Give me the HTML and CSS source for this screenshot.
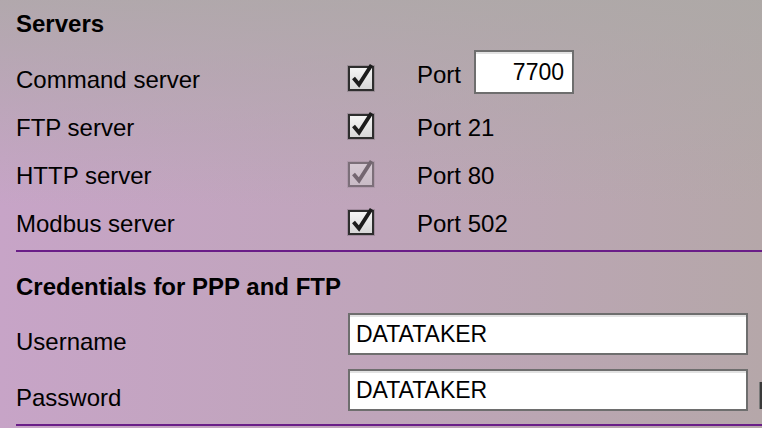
FILE: index.html
```html
<!DOCTYPE html>
<html lang="en">
<head>
<meta charset="utf-8">
<title>Servers</title>
<link rel="stylesheet" href="styles.css">
</head>
<body>
<div class="page">
  <section class="servers">
    <h2 class="section-title">Servers</h2>
    <div class="server-row">
      <span class="label">Command server</span>
      <span class="check">
        <svg width="28" height="28" viewBox="0 0 28 28"><defs><linearGradient id="cbg" x1="0" y1="0" x2="0" y2="1"><stop offset="0" stop-color="#f6f6f6"/><stop offset="1" stop-color="#d6d6d6"/></linearGradient></defs><rect x="0.5" y="1.5" width="27" height="26" fill="none" stroke="rgba(0,0,0,0.15)"/><rect x="2" y="3" width="24" height="23" fill="url(#cbg)" stroke="#2e2e2e" stroke-width="2"/><path d="M6.5 14 L12 20.5 L24.5 1" fill="none" stroke="#1c1c1c" stroke-width="3.8"/></svg>
      </span>
      <span class="port port-edit"><span class="port-word">Port</span><input class="port-input" type="text" value="7700"></span>
    </div>
    <div class="server-row">
      <span class="label">FTP server</span>
      <span class="check">
        <svg width="28" height="28" viewBox="0 0 28 28"><rect x="0.5" y="1.5" width="27" height="26" fill="none" stroke="rgba(0,0,0,0.15)"/><rect x="2" y="3" width="24" height="23" fill="url(#cbg)" stroke="#2e2e2e" stroke-width="2"/><path d="M6.5 14 L12 20.5 L24.5 1" fill="none" stroke="#1c1c1c" stroke-width="3.8"/></svg>
      </span>
      <span class="port">Port 21</span>
    </div>
    <div class="server-row">
      <span class="label">HTTP server</span>
      <span class="check check-disabled">
        <svg width="28" height="28" viewBox="0 0 28 28"><rect x="0.5" y="1.5" width="27" height="26" fill="none" stroke="rgba(0,0,0,0.15)"/><rect x="2" y="3" width="24" height="23" fill="url(#cbg)" stroke="#2e2e2e" stroke-width="2"/><path d="M6.5 14 L12 20.5 L24.5 1" fill="none" stroke="#1c1c1c" stroke-width="3.8"/></svg>
      </span>
      <span class="port">Port 80</span>
    </div>
    <div class="server-row">
      <span class="label">Modbus server</span>
      <span class="check">
        <svg width="28" height="28" viewBox="0 0 28 28"><rect x="0.5" y="1.5" width="27" height="26" fill="none" stroke="rgba(0,0,0,0.15)"/><rect x="2" y="3" width="24" height="23" fill="url(#cbg)" stroke="#2e2e2e" stroke-width="2"/><path d="M6.5 14 L12 20.5 L24.5 1" fill="none" stroke="#1c1c1c" stroke-width="3.8"/></svg>
      </span>
      <span class="port">Port 502</span>
    </div>
    <div class="divider"></div>
  </section>
  <section class="credentials">
    <h2 class="section-title">Credentials for PPP and FTP</h2>
    <div class="cred-row">
      <span class="label">Username</span>
      <input class="text-input" type="text" value="DATATAKER">
    </div>
    <div class="cred-row">
      <span class="label">Password</span>
      <input class="text-input" type="text" value="DATATAKER">
      <span class="side-button"></span>
    </div>
    <div class="divider"></div>
  </section>
</div>
</body>
</html>
```
FILE: styles.css
```css
html, body {
  margin: 0;
  padding: 0;
  height: 100%;
  overflow: hidden;
}
html {
  background:
    linear-gradient(to bottom, rgba(172, 169, 166, 0.8) 0%, rgba(172, 169, 166, 0) 48%),
    linear-gradient(to right, #c7a4c7 0%, #bfa5ba 50%, #b5a7a9 100%);
}
body {
  font-family: "Liberation Sans", Arial, sans-serif;
  color: #000;
}
.page {
  padding-left: 16px;
}
.servers {
  padding-top: 8px;
}
.section-title {
  margin: 0 0 16px 0;
  font-size: 24px;
  line-height: 32px;
  font-weight: bold;
}
.server-row {
  display: grid;
  grid-template-columns: 331px 70px auto;
  height: 48px;
  align-items: start;
}
.label {
  font-size: 24px;
  line-height: 48px;
}
.check {
  display: flex;
  margin-top: 8px;
}
.check svg {
  display: block;
}
.check-disabled {
  opacity: 0.45;
}
.port {
  font-size: 24px;
  line-height: 48px;
}
.port-edit {
  display: flex;
  align-items: center;
  gap: 13px;
  height: 44px;
  margin-top: -6px;
  line-height: normal;
}
.port-word {
  margin-top: 6px;
}
.port-input {
  box-sizing: border-box;
  width: 100px;
  height: 44px;
  border: 2px solid #6e6e6e;
  box-shadow: inset 0 2px 0 #e2e2e2;
  background: #fff;
  font-family: "Liberation Sans", Arial, sans-serif;
  font-size: 23px;
  color: #000;
  text-align: right;
  padding: 0 8px 0 4px;
  margin: 0;
  outline: none;
}
.divider {
  height: 2px;
  background: #6a1e88;
  margin-top: 2px;
}
.credentials {
  padding-top: 19px;
}
.credentials .section-title {
  margin-bottom: 7px;
}
.cred-row {
  display: grid;
  grid-template-columns: 332px 400px auto;
  height: 56px;
}
.cred-row .label {
  align-self: end;
}
.text-input {
  box-sizing: border-box;
  width: 400px;
  height: 42px;
  margin: 3px 0 0 0;
  border: 2px solid #6e6e6e;
  box-shadow: inset 0 2px 0 #e2e2e2;
  background: #fff;
  font-family: "Liberation Sans", Arial, sans-serif;
  font-size: 23px;
  color: #000;
  padding: 0 6px;
  outline: none;
}
.side-button {
  display: block;
  width: 40px;
  height: 27px;
  margin: 16px 0 0 11px;
  background: #3a3a3a;
  border-left: 1px solid #7a7a7a;
}
```
